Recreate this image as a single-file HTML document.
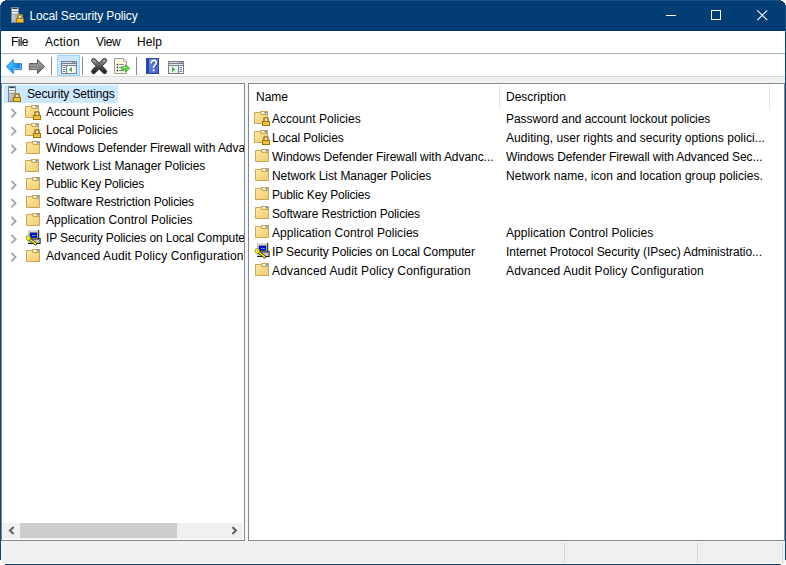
<!DOCTYPE html>
<html><head><meta charset="utf-8">
<style>
*{margin:0;padding:0;box-sizing:border-box}
html,body{width:786px;height:565px;overflow:hidden;background:#fff}
body{position:relative;font-family:"Liberation Sans",sans-serif;font-size:12px;color:#000}
.a{position:absolute;overflow:visible}
.t{position:absolute;white-space:nowrap;line-height:14px}
.sep{position:absolute;top:57px;width:1px;height:18px;background:#8c8c8c}
</style></head>
<body>
<svg width="0" height="0" style="position:absolute">
<defs>
 <linearGradient id="gFold" x1="0" y1="0" x2="1" y2="1">
  <stop offset="0" stop-color="#fce9a8"/><stop offset="1" stop-color="#f1cb6c"/>
 </linearGradient>
 <linearGradient id="gLock" x1="0" y1="0" x2="0" y2="1">
  <stop offset="0" stop-color="#f0c83a"/><stop offset="0.5" stop-color="#d9a41c"/><stop offset="1" stop-color="#b8840e"/>
 </linearGradient>
 <linearGradient id="gSrv" x1="0" y1="0" x2="1" y2="1">
  <stop offset="0" stop-color="#e4e8ec"/><stop offset="1" stop-color="#959ca6"/>
 </linearGradient>
 <linearGradient id="gBack" x1="0" y1="0" x2="1" y2="0.6">
  <stop offset="0" stop-color="#78ccff"/><stop offset="0.55" stop-color="#2aa8f4"/><stop offset="1" stop-color="#0868cc"/>
 </linearGradient>
 <linearGradient id="gFwd" x1="0" y1="0" x2="0" y2="1">
  <stop offset="0" stop-color="#a8a8a8"/><stop offset="1" stop-color="#6c6c6c"/>
 </linearGradient>
 <linearGradient id="gX" x1="0" y1="0" x2="0" y2="1">
  <stop offset="0" stop-color="#9a9a9a"/><stop offset="0.5" stop-color="#555"/><stop offset="1" stop-color="#2a2a2a"/>
 </linearGradient>
 <linearGradient id="gHelp" x1="0" y1="0" x2="1" y2="1">
  <stop offset="0" stop-color="#7694e6"/><stop offset="1" stop-color="#3d5fc4"/>
 </linearGradient>
 <symbol id="lock" viewBox="0 0 8 9" overflow="visible">
  <rect x="1" y="0" width="6" height="5" rx="1.6" fill="#ab8a34"/>
  <rect x="2.9" y="1.8" width="2.2" height="2.2" fill="#f2e6c4"/>
  <rect x="0" y="4" width="8" height="5" fill="url(#gLock)"/>
  <rect x="0.5" y="4.5" width="7" height="4" fill="none" stroke="#a0760c" stroke-width="1"/>
  <rect x="1" y="5.6" width="6" height="0.8" fill="#fbe27a"/>
  <rect x="1" y="7.2" width="6" height="0.8" fill="#f4d04a"/>
 </symbol>
 <symbol id="f" viewBox="0 0 16 18" overflow="visible">
  <rect x="7.5" y="2.5" width="7" height="4" fill="#f6da8c" stroke="#c9a55a"/>
  <rect x="9" y="3" width="3" height="1.3" fill="#fff"/>
  <rect x="11.5" y="3" width="2.2" height="1.4" fill="#3f8fe6"/>
  <path d="M1.5 3.5H6.5L8 5.5H14.5V14.5H1.5Z" fill="url(#gFold)" stroke="#c9a55a"/>
 </symbol>
 <symbol id="fl" viewBox="0 0 18 18" overflow="visible">
  <use href="#f" x="0" y="0" width="16" height="18"/>
  <use href="#lock" x="9" y="8" width="8" height="9"/>
 </symbol>
 <symbol id="srv" viewBox="0 0 16 16" overflow="visible">
  <rect x="2" y="0" width="8" height="16" fill="url(#gSrv)"/>
  <rect x="2.5" y="0.5" width="7" height="15" fill="none" stroke="#7f868f"/>
  <rect x="3.5" y="1" width="5" height="1.2" fill="#1d4656"/>
  <rect x="3" y="2.4" width="6" height="1.8" fill="#f7f9fb"/>
  <rect x="3" y="4.2" width="6" height="0.8" fill="#7c838c"/>
  <rect x="3" y="5" width="6" height="1.8" fill="#eef1f4"/>
  <rect x="3" y="6.8" width="6" height="0.8" fill="#8a9199"/>
  <use href="#lock" x="7" y="7" width="8" height="9"/>
 </symbol>
 <symbol id="ip" viewBox="0 0 16 18" overflow="visible">
  <rect x="3" y="1" width="11.2" height="9.6" rx="1" fill="#151515"/>
  <rect x="3" y="1" width="10.2" height="8.6" rx="1" fill="#cdcdcd"/>
  <rect x="3.4" y="1.4" width="9.6" height="1" fill="#ececec"/>
  <rect x="4.8" y="3.6" width="7.4" height="5.2" fill="#141414"/>
  <rect x="5.4" y="4.2" width="6.4" height="4" fill="#0010f0"/>
  <rect x="7" y="6" width="4.2" height="1" fill="#2aa8a8"/>
  <path d="M3 10H13.4L14.4 9H15.6V15H3Z" fill="#141414"/>
  <path d="M3 10.4H13.6L14.6 9.6V14H3Z" fill="#c8c8c8"/>
  <path d="M3.6 9.4L10.6 14.9" stroke="#161616" stroke-width="2.8" stroke-linecap="round"/>
  <path d="M3.6 9.4L10.6 14.9" stroke="#ffff00" stroke-width="1.5" stroke-linecap="round"/>
  <circle cx="3.3" cy="9" r="2.4" fill="#ffff00" stroke="#5a5a10" stroke-width="0.6"/>
  <circle cx="3.5" cy="8.8" r="0.9" fill="#a8b0ff"/>
 </symbol>
 <symbol id="chev" viewBox="0 0 8 11" overflow="visible">
  <path d="M1.4 1L5.6 5.2L1.4 9.4" fill="none" stroke="#a6a6a6" stroke-width="1.9"/>
 </symbol>
</defs>
</svg>
<!-- chrome -->
<div class="a" style="left:0;top:0;width:786px;height:31px;background:#023e74"></div>
<svg class="a" style="left:9px;top:7px" width="16" height="16"><use href="#srv"/></svg>
<div class="t" style="left:29.5px;top:9px;color:#fff;letter-spacing:-0.125px">Local Security Policy</div>
<div class="a" style="left:666px;top:15px;width:10px;height:1px;background:#fff"></div>
<div class="a" style="left:711px;top:10px;width:10px;height:10px;border:1px solid #fff"></div>
<svg class="a" style="left:756px;top:9px" width="13" height="13"><path d="M1.3 1.3L11.2 11.2M11.2 1.3L1.3 11.2" stroke="#fff" stroke-width="1.1"/></svg>

<!-- menu -->
<div class="a" style="left:0;top:53px;width:786px;height:1px;background:#b4b4b4"></div>
<div class="a" style="left:0;top:54px;width:786px;height:1px;background:#f6f9fc"></div>
<div class="t" style="left:11px;top:35px;letter-spacing:-0.6px">File</div>
<div class="t" style="left:45px;top:35px;letter-spacing:0.24px">Action</div>
<div class="t" style="left:96px;top:35px;letter-spacing:-0.36px">View</div>
<div class="t" style="left:137px;top:35px;letter-spacing:0.07px">Help</div>

<!-- toolbar -->
<div class="a" style="left:0;top:76px;width:786px;height:1px;background:#dadada"></div>
<div class="a" style="left:0;top:77px;width:786px;height:488px;background:#f0f0f0"></div>
<div class="a" style="left:1px;top:82px;width:784px;height:1px;background:#f5f5f5"></div>
<div class="a" style="left:245px;top:83px;width:3px;height:458px;background:#f6f6f6"></div>
<div class="a" style="left:1px;top:541px;width:784px;height:1px;background:#f4f4f4"></div>
<div class="a" style="left:1px;top:563px;width:784px;height:1px;background:#f9f9f9"></div>
<svg class="a" style="left:5px;top:58px" width="18" height="17"><path d="M1.2 8.6L8.3 1.6V5.6H16.5V11.6H8.3V15.6Z" fill="url(#gBack)" stroke="#2f86d8" stroke-width="1"/><path d="M15.4 6.6V10.6H8" fill="none" stroke="#a6d8fa" stroke-width="0.9" opacity="0.8"/></svg>
<svg class="a" style="left:28px;top:58px" width="18" height="17"><path d="M16.6 8.6L9.5 1.6V5.6H1.3V11.6H9.5V15.6Z" fill="url(#gFwd)" stroke="#5c5c5c" stroke-width="1"/><path d="M2.3 10.6H9.6" fill="none" stroke="#c8c8c8" stroke-width="0.9" opacity="0.7"/></svg>
<div class="sep" style="left:51px"></div>
<div class="a" style="left:57px;top:55px;width:23px;height:21px;background:#cce8ff;border:1px solid #99d1ff"></div>
<svg class="a" style="left:61px;top:61px" width="16" height="13">
 <rect x="0.5" y="0.5" width="15" height="12" fill="#fff" stroke="#7a808b"/>
 <rect x="1" y="1" width="14" height="2" fill="#d7dce3"/>
 <rect x="11" y="1" width="1" height="2" fill="#7a808b"/><rect x="13" y="1" width="1" height="2" fill="#7a808b"/>
 <rect x="1" y="2" width="14" height="1" fill="#7a808b"/>
 <rect x="1" y="3" width="14" height="1" fill="#e3e7ec"/>
 <rect x="1" y="4" width="14" height="1" fill="#7a808b"/>
 <rect x="5" y="5" width="1" height="7" fill="#7a808b"/>
 <rect x="2" y="6" width="2.5" height="1" fill="#4a7fc0"/><rect x="2" y="8" width="2.5" height="1" fill="#4a7fc0"/><rect x="2" y="10" width="2.5" height="1" fill="#4a7fc0"/>
 <rect x="12" y="5" width="3" height="7" fill="#eeeeee"/>
 <path d="M7.8 8.5L11 5.8V11.2Z" fill="#3cb43c"/>
</svg>
<div class="sep" style="left:82px"></div>
<svg class="a" style="left:89.6px;top:56.6px" width="18" height="18"><path d="M3.6 3.6L14.6 14.6M14.6 3.6L3.6 14.6" stroke="#3a3a3a" stroke-width="5" stroke-linecap="round"/><path d="M3.6 3.6L14.6 14.6M14.6 3.6L3.6 14.6" stroke="url(#gX)" stroke-width="3.2" stroke-linecap="round"/></svg>
<svg class="a" style="left:113px;top:57px" width="19" height="18">
 <path d="M1.5 1.5H10.5L13.5 4.5V16.5H1.5Z" fill="#fcf6dc" stroke="#9d9d9d"/>
 <path d="M10.5 1.5V4.5H13.5Z" fill="#fff" stroke="#a8a8a8" stroke-width="0.8"/>
 <circle cx="4.4" cy="7.6" r="0.8" fill="#222"/><circle cx="4.4" cy="10.6" r="0.8" fill="#222"/><circle cx="4.4" cy="13.6" r="0.8" fill="#222"/>
 <rect x="6.2" y="7.1" width="4.8" height="1" fill="#7d7bb8"/><rect x="6.2" y="10.1" width="4.8" height="1" fill="#7d7bb8"/><rect x="6.2" y="13.1" width="4.8" height="1" fill="#7d7bb8"/>
 <path d="M8.6 9.7H12.4V7.7L16.8 11.3L12.4 14.9V12.9H8.6Z" fill="#6ad456" stroke="#3aa82a" stroke-width="0.8"/>
 <path d="M9.4 10.6H13" stroke="#b8f0a0" stroke-width="0.8"/>
</svg>
<div class="sep" style="left:136px"></div>
<svg class="a" style="left:146px;top:58px" width="13" height="16">
 <rect x="0" y="0" width="13" height="16" fill="url(#gHelp)"/>
 <rect x="0" y="0" width="3" height="16" fill="#2b48a8"/>
 <rect x="0.5" y="0.5" width="12" height="15" fill="none" stroke="#2a46a0"/>
 <path d="M6 6.2Q6.4 3.4 8.8 3.4Q11.2 3.8 10.8 6Q10.6 7.4 9.2 8.4Q8.2 9.2 8.2 11" fill="none" stroke="#2a3a80" stroke-width="1.4"/>
 <path d="M5.3 5.6Q5.6 2.4 8 2.4Q10.6 2.6 10.2 5.2Q10 6.6 8.6 7.6Q7.6 8.4 7.6 10.2" fill="none" stroke="#fff" stroke-width="1.6"/>
 <rect x="6.7" y="11.4" width="1.9" height="1.9" rx="0.5" fill="#fff"/>
</svg>
<svg class="a" style="left:168px;top:61px" width="16" height="13">
 <rect x="0.5" y="0.5" width="15" height="12" fill="#fff" stroke="#7a808b"/>
 <rect x="1" y="1" width="14" height="2" fill="#d7dce3"/>
 <rect x="11" y="1" width="1" height="2" fill="#7a808b"/><rect x="13" y="1" width="1" height="2" fill="#7a808b"/>
 <rect x="1" y="2" width="14" height="1" fill="#7a808b"/>
 <rect x="1" y="3" width="14" height="1" fill="#e3e7ec"/>
 <rect x="1" y="4" width="14" height="1" fill="#7a808b"/>
 <rect x="10" y="5" width="1" height="7" fill="#7a808b"/>
 <rect x="1" y="5" width="9" height="7" fill="#efefef"/>
 <rect x="11.5" y="6" width="2.5" height="1" fill="#4a7fc0"/><rect x="11.5" y="8" width="2.5" height="1" fill="#4a7fc0"/><rect x="11.5" y="10" width="2.5" height="1" fill="#4a7fc0"/>
 <path d="M7.2 8.5L4 5.8V11.2Z" fill="#3cb43c"/>
</svg>

<!-- left pane -->
<div class="a" style="left:1px;top:83px;width:244px;height:458px;border:1px solid #828790;background:#fff"></div>
<div class="a" style="left:4px;top:85px;width:114px;height:18px;background:#cce8ff"></div>
<svg class="a" style="left:6px;top:86px" width="16" height="16"><use href="#srv"/></svg>
<div class="t" style="left:27px;top:87px;letter-spacing:-0.14px">Security Settings</div>
<div class="a" style="left:2px;top:84px;width:242px;height:438px;overflow:hidden">
<div style="position:absolute;left:-2px;top:-84px;width:786px;height:565px">
<svg class="a" style="left:10px;top:108px" width="8" height="11"><use href="#chev"/></svg>
<svg class="a" style="left:24px;top:103px" width="18" height="18"><use href="#fl"/></svg>
<div class="t" style="left:46px;top:105px;letter-spacing:-0.04px">Account Policies</div>
<svg class="a" style="left:10px;top:126px" width="8" height="11"><use href="#chev"/></svg>
<svg class="a" style="left:24px;top:121px" width="18" height="18"><use href="#fl"/></svg>
<div class="t" style="left:46px;top:123px;letter-spacing:-0.131px">Local Policies</div>
<svg class="a" style="left:10px;top:144px" width="8" height="11"><use href="#chev"/></svg>
<svg class="a" style="left:24px;top:139px" width="18" height="18"><use href="#f"/></svg>
<div class="t" style="left:46px;top:141px;letter-spacing:-0.049px">Windows Defender Firewall with Advanced Security</div>
<svg class="a" style="left:23px;top:157px" width="18" height="18"><use href="#f"/></svg>
<div class="t" style="left:46px;top:159px;letter-spacing:-0.075px">Network List Manager Policies</div>
<svg class="a" style="left:10px;top:180px" width="8" height="11"><use href="#chev"/></svg>
<svg class="a" style="left:24px;top:175px" width="18" height="18"><use href="#f"/></svg>
<div class="t" style="left:46px;top:177px;letter-spacing:-0.167px">Public Key Policies</div>
<svg class="a" style="left:10px;top:198px" width="8" height="11"><use href="#chev"/></svg>
<svg class="a" style="left:24px;top:193px" width="18" height="18"><use href="#f"/></svg>
<div class="t" style="left:46px;top:195px;letter-spacing:-0.143px">Software Restriction Policies</div>
<svg class="a" style="left:10px;top:216px" width="8" height="11"><use href="#chev"/></svg>
<svg class="a" style="left:24px;top:211px" width="18" height="18"><use href="#f"/></svg>
<div class="t" style="left:46px;top:213px;letter-spacing:0.044px">Application Control Policies</div>
<svg class="a" style="left:10px;top:234px" width="8" height="11"><use href="#chev"/></svg>
<svg class="a" style="left:24px;top:229px" width="18" height="18"><use href="#ip"/></svg>
<div class="t" style="left:46px;top:231px;letter-spacing:-0.116px">IP Security Policies on Local Computer</div>
<svg class="a" style="left:10px;top:252px" width="8" height="11"><use href="#chev"/></svg>
<svg class="a" style="left:24px;top:247px" width="18" height="18"><use href="#f"/></svg>
<div class="t" style="left:46px;top:249px;letter-spacing:0.12px">Advanced Audit Policy Configuration</div>
</div></div>
<div class="a" style="left:2px;top:523px;width:241px;height:16px;background:#f0f0f0"></div>
<div class="a" style="left:20px;top:523px;width:157px;height:15px;background:#cdcdcd"></div>
<svg class="a" style="left:7px;top:525px" width="10" height="11"><path d="M6.6 2L3 5.5L6.6 9" fill="none" stroke="#606060" stroke-width="2"/></svg>
<svg class="a" style="left:229px;top:525px" width="10" height="11"><path d="M3.4 2L7 5.5L3.4 9" fill="none" stroke="#606060" stroke-width="2"/></svg>

<!-- right pane -->
<div class="a" style="left:248px;top:83px;width:537px;height:458px;border:1px solid #828790;background:#fff"></div>
<div class="t" style="left:256px;top:90px">Name</div>
<div class="t" style="left:506px;top:90px">Description</div>
<div class="a" style="left:499px;top:85px;width:1px;height:24px;background:#e5e5e5"></div>
<div class="a" style="left:769px;top:85px;width:1px;height:24px;background:#e5e5e5"></div>
<svg class="a" style="left:253px;top:109px" width="18" height="18"><use href="#fl"/></svg>
<div class="t" style="left:272px;top:112px;letter-spacing:0.04px">Account Policies</div>
<div class="t" style="left:506px;top:112px;letter-spacing:-0.05px">Password and account lockout policies</div>
<svg class="a" style="left:253px;top:128px" width="18" height="18"><use href="#fl"/></svg>
<div class="t" style="left:272px;top:131px;letter-spacing:-0.131px">Local Policies</div>
<div class="t" style="left:506px;top:131px;letter-spacing:0.04px">Auditing, user rights and security options polici...</div>
<svg class="a" style="left:253px;top:147px" width="18" height="18"><use href="#f"/></svg>
<div class="t" style="left:272px;top:150px;letter-spacing:-0.049px">Windows Defender Firewall with Advanc...</div>
<div class="t" style="left:506px;top:150px;letter-spacing:-0.1px">Windows Defender Firewall with Advanced Sec...</div>
<svg class="a" style="left:253px;top:166px" width="18" height="18"><use href="#f"/></svg>
<div class="t" style="left:272px;top:169px;letter-spacing:-0.075px">Network List Manager Policies</div>
<div class="t" style="left:506px;top:169px;letter-spacing:0.046px">Network name, icon and location group policies.</div>
<svg class="a" style="left:253px;top:185px" width="18" height="18"><use href="#f"/></svg>
<div class="t" style="left:272px;top:188px;letter-spacing:-0.167px">Public Key Policies</div>
<svg class="a" style="left:253px;top:204px" width="18" height="18"><use href="#f"/></svg>
<div class="t" style="left:272px;top:207px;letter-spacing:-0.143px">Software Restriction Policies</div>
<svg class="a" style="left:253px;top:223px" width="18" height="18"><use href="#f"/></svg>
<div class="t" style="left:272px;top:226px;letter-spacing:0.044px">Application Control Policies</div>
<div class="t" style="left:506px;top:226px;letter-spacing:0.07px">Application Control Policies</div>
<svg class="a" style="left:253px;top:242px" width="18" height="18"><use href="#ip"/></svg>
<div class="t" style="left:272px;top:245px;letter-spacing:-0.116px">IP Security Policies on Local Computer</div>
<div class="t" style="left:506px;top:245px;letter-spacing:-0.042px">Internet Protocol Security (IPsec) Administratio...</div>
<svg class="a" style="left:253px;top:261px" width="18" height="18"><use href="#f"/></svg>
<div class="t" style="left:272px;top:264px;letter-spacing:0.15px">Advanced Audit Policy Configuration</div>
<div class="t" style="left:506px;top:264px;letter-spacing:0.125px">Advanced Audit Policy Configuration</div>

<!-- status bar -->
<div class="a" style="left:564px;top:543px;width:1px;height:20px;background:#d7d7d7"></div>
<div class="a" style="left:697px;top:543px;width:1px;height:20px;background:#d7d7d7"></div>
<div class="a" style="left:782px;top:543px;width:1px;height:20px;background:#d7d7d7"></div>

<!-- frame -->
<div class="a" style="left:0;top:0;width:1px;height:31px;background:#1a5085"></div>
<div class="a" style="left:785px;top:0;width:1px;height:31px;background:#1a5085"></div>
<div class="a" style="left:0;top:0;width:786px;height:1px;background:#1a5085"></div>
<div class="a" style="left:1px;top:30px;width:784px;height:1px;background:#013770"></div>
<div class="a" style="left:0;top:31px;width:1px;height:529px;background:#0a467e"></div>
<div class="a" style="left:785px;top:31px;width:1px;height:529px;background:#0a467e"></div>
<div class="a" style="left:5px;top:564px;width:776px;height:1px;background:#0a467e"></div>
<div class="a" style="left:0;top:560px;width:1px;height:5px;background:#fff"></div>
<div class="a" style="left:1px;top:564px;width:4px;height:1px;background:#fff"></div>
<div class="a" style="left:785px;top:560px;width:1px;height:5px;background:#fff"></div>
<div class="a" style="left:781px;top:564px;width:4px;height:1px;background:#fff"></div>
<div class="a" style="left:1px;top:563px;width:4px;height:1px;background:#fafafa"></div>
<div class="a" style="left:1px;top:560px;width:1px;height:4px;background:#fafafa"></div>
<div class="a" style="left:0;top:0;width:5px;height:1px;background:#fff"></div>
<div class="a" style="left:0;top:1px;width:3px;height:1px;background:#fff"></div>
<div class="a" style="left:0;top:2px;width:2px;height:1px;background:#fff"></div>
<div class="a" style="left:0;top:3px;width:1px;height:2px;background:#fff"></div>
<div class="a" style="left:781px;top:0;width:5px;height:1px;background:#fff"></div>
<div class="a" style="left:783px;top:1px;width:3px;height:1px;background:#fff"></div>
<div class="a" style="left:784px;top:2px;width:2px;height:1px;background:#fff"></div>
<div class="a" style="left:785px;top:3px;width:1px;height:2px;background:#fff"></div>
</body></html>
